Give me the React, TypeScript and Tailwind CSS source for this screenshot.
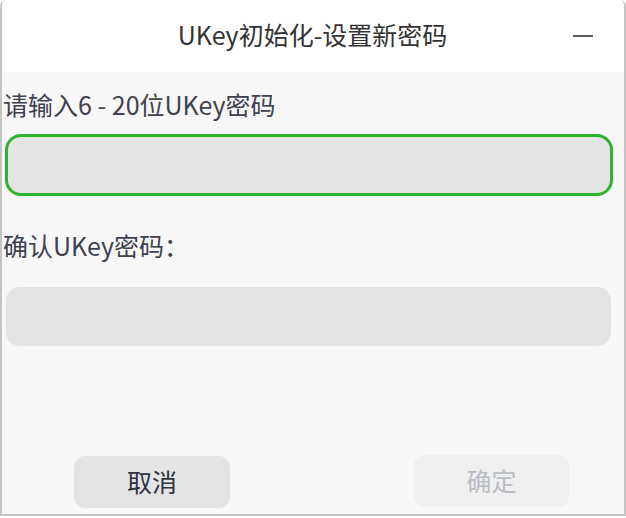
import React from "react";

export default function App() {
  const font = { fontFamily: '"Noto Sans CJK SC", "Noto Sans", sans-serif' };
  return (
    <div className="w-[626px] h-[518px] bg-white" style={font}>
      <div className="w-[626px] h-[516px] flex flex-col border-x-2 border-b-2 border-[#c4c4c4] rounded-t-[6px] overflow-hidden bg-[#f7f7f7]">
        <div className="relative h-[72px] shrink-0 bg-white flex items-center justify-center">
          <span className="text-[25px] leading-[32px] text-[#333333] ml-[-1px] mt-[-4px]">UKey初始化-设置新密码</span>
          <div className="absolute left-[571px] top-[35px] w-[20px] h-[2px] bg-[#5a5a5a]" />
        </div>
        <div className="flex flex-col flex-1 pl-[1px]">
          <div className="mt-[16px] h-[32px] text-[25px] leading-[32px] text-[#3e4150]">请输入6 - 20位UKey密码</div>
          <div className="mt-[14px] ml-[2px] mr-[11px] h-[62px] rounded-[16px] border-[3px] border-[#2bb52b] bg-[#e4e4e4]" />
          <div className="mt-[33px] h-[32px] text-[25px] leading-[32px] text-[#3e4150]">确认UKey密码：</div>
          <div className="mt-[26px] ml-[3px] mr-[13px] h-[59px] rounded-[14px] bg-[#e4e4e4]" />
          <div className="flex-1" />
          <div className="flex items-start mb-[6px]">
            <div className="ml-[71px] w-[156px] h-[52px] mt-[1px] rounded-[11px] bg-[#e4e4e4] flex items-center justify-center text-[25px] text-[#2f3340]">取消</div>
            <div className="ml-[184px] w-[155px] h-[52px] rounded-[11px] bg-[#efefef] flex items-center justify-center text-[25px] text-[#b9bcc4]">确定</div>
          </div>
        </div>
      </div>
    </div>
  );
}
